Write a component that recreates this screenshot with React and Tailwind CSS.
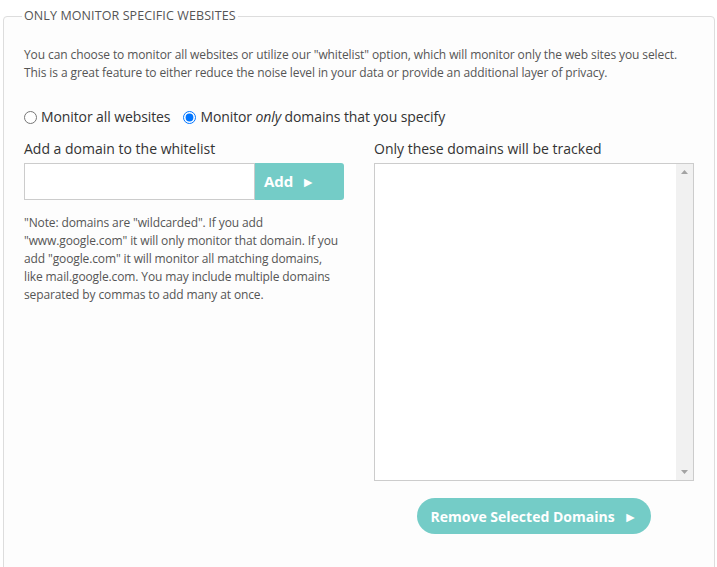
export default function App() {
  return (
    <div className="min-h-screen bg-white pl-[3px] pr-[4px] pt-[8px] font-['Open_Sans',sans-serif] text-[#555]">
      <fieldset className="min-h-[600px] rounded-[4px] border border-[#ddd] bg-[#fdfdfd] px-5">
        <legend className="-ml-[2px] px-[2px] text-[12.5px] font-medium uppercase leading-4 tracking-[0.1px] text-[#555]">
          Only Monitor Specific Websites
        </legend>
        <p className="mt-[22px] text-[12px] leading-[18px] tracking-[-0.1px]">
          You can choose to monitor all websites or utilize our "whitelist" option, which will monitor only the web sites you select.
          <br />
          This is a great feature to either reduce the noise level in your data or provide an additional layer of privacy.
        </p>
        <div className="mt-[25px] flex items-center text-[14px] leading-5 tracking-[-0.1px] text-[#333]">
          <label className="flex items-center">
            <input type="radio" name="mode" className="m-0 mr-[4px] h-[13px] w-[13px]" />
            Monitor all websites
          </label>
          <label className="ml-[13px] flex items-center">
            <input type="radio" name="mode" defaultChecked className="m-0 mr-[4px] h-[13px] w-[13px]" />
            Monitor&nbsp;<em>only</em>&nbsp;domains that you specify
          </label>
        </div>
        <div className="mt-[12px] flex">
          <div className="w-[320px]">
            <div className="text-[14px] leading-5 text-[#333]">Add a domain to the whitelist</div>
            <div className="mt-[4px] flex h-[37px]">
              <input className="h-full w-[231px] border border-[#ccc] bg-white px-2 outline-none" />
              <button className="flex h-full w-[89px] items-center rounded-r-[3px] bg-[#74ccc7] pl-[9px] text-[15px] font-bold text-white">
                Add <span className="ml-[8px] text-[14px]">►</span>
              </button>
            </div>
            <p className="mt-[14px] w-[316px] text-[12px] leading-[18px] tracking-[-0.12px]">
              "Note: domains are "wildcarded". If you add "www.google.com" it will only monitor that domain. If you add "google.com" it will monitor all matching domains, like mail.google.com. You may include multiple domains separated by commas to add many at once.
            </p>
          </div>
          <div className="ml-[30px] w-[320px]">
            <div className="text-[14px] leading-5 text-[#333]">Only these domains will be tracked</div>
            <div className="mt-[4px] flex h-[318px] border border-[#ccc] bg-white">
              <div className="flex-1" />
              <div className="flex w-[17px] flex-col items-center justify-between bg-[#f1f1f1] py-[6px]">
                <svg width="7" height="4" viewBox="0 0 7 4"><path d="M3.5 0L7 4H0z" fill="#a3a3a3" /></svg>
                <svg width="7" height="4" viewBox="0 0 7 4"><path d="M0 0h7L3.5 4z" fill="#a3a3a3" /></svg>
              </div>
            </div>
            <div className="mt-[17px] flex justify-center">
              <button className="flex h-[36px] w-[234px] items-center justify-center rounded-full bg-[#74ccc7] text-[14px] font-bold text-white">
                Remove Selected Domains <span className="ml-[9px] text-[14px]">►</span>
              </button>
            </div>
          </div>
        </div>
      </fieldset>
    </div>
  );
}
